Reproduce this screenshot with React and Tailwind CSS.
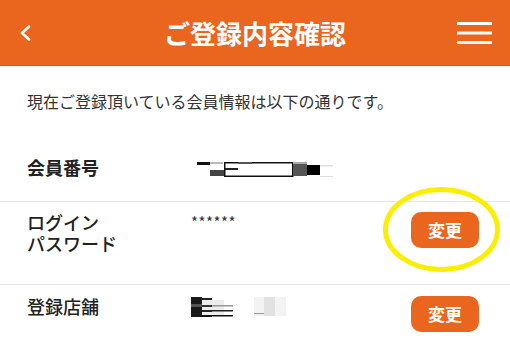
export default function App() {
  return (
    <div className="w-[510px] h-[360px] overflow-hidden bg-white font-['Noto_Sans_CJK_JP','Noto_Sans',sans-serif] text-[#222]">
      <header className="flex items-center h-[66px] bg-[#ea661f] border-b border-[#d85818] px-[14px] text-white">
        <div className="w-[44px] flex items-center">
          <svg width="20" height="20" viewBox="0 0 20 20" className="ml-[3px]">
            <polyline points="12,3.5 5,10 12,16.5" fill="none" stroke="#fff" strokeWidth="2.6" strokeLinecap="round" strokeLinejoin="round" />
          </svg>
        </div>
        <h1 className="flex-1 text-center text-[26px] leading-[32px] font-bold">ご登録内容確認</h1>
        <div className="w-[44px] flex justify-end">
          <svg width="35" height="24" viewBox="0 0 35 24" className="mr-[4px]">
            <rect x="0" y="1" width="35" height="3" fill="#fff" />
            <rect x="0" y="10.5" width="35" height="3" fill="#fff" />
            <rect x="0" y="20" width="35" height="3" fill="#fff" />
          </svg>
        </div>
      </header>

      <p className="pt-[23px] px-[27px] text-[16px] leading-[24px] text-[#333]">
        現在ご登録頂いている会員情報は以下の通りです。
      </p>

      <div className="mt-[44px] pb-[24px] px-[27px] flex items-start">
        <div className="w-[164px] text-[18px] leading-[20px] font-bold">会員番号</div>
        <svg width="150" height="20" viewBox="0 0 150 20">
          <rect x="6" y="5" width="13" height="3" fill="#111" />
          <rect x="19" y="5" width="13" height="2" fill="#bbb" />
          <rect x="19" y="13" width="14" height="6" fill="#444" />
          <rect x="33" y="11" width="14" height="2" fill="#222" />
          <rect x="33.75" y="5.75" width="68" height="13.5" fill="none" stroke="#111" strokeWidth="1.5" />
          <rect x="47" y="5" width="14" height="2" fill="#555" />
          <rect x="102" y="5" width="14" height="14" fill="#555" />
          <rect x="102" y="5" width="14" height="2" fill="#aaa" />
          <rect x="116" y="8" width="13" height="10" fill="#000" />
          <rect x="129" y="8" width="13" height="1.5" fill="#ddd" />
          <rect x="129" y="19" width="13" height="1.5" fill="#ddd" />
        </svg>
      </div>

      <div className="border-t border-[#e6e6e6] h-[83px] pt-[10px] pl-[27px] pr-[31px] flex items-start">
        <div className="w-[164px] text-[18px] leading-[21px] font-medium">
          <div>ログイン</div>
          <div>パスワード</div>
        </div>
        <div className="text-[15px] leading-[20px] text-[#333] tracking-[0.5px]">******</div>
        <div className="relative ml-auto">
          <svg width="117" height="85" viewBox="0 0 117 85" className="absolute left-[-28px] top-[-25px]">
            <ellipse cx="58.5" cy="42.5" rx="56" ry="40" fill="none" stroke="#fcee00" strokeWidth="5" />
          </svg>
          <button className="relative w-[68px] h-[36px] rounded-[10px] bg-[#ea661f] text-white text-[17px] font-bold">変更</button>
        </div>
      </div>

      <div className="border-t border-[#e6e6e6] pt-[11px] pl-[27px] pr-[31px] flex items-start">
        <div className="w-[164px] text-[18px] leading-[20px] font-medium">登録店舗</div>
        <svg width="110" height="22" viewBox="0 0 110 22">
          <rect x="11" y="4" width="22" height="16" fill="#ececec" />
          <rect x="0" y="1" width="11" height="20" fill="#1a1a1a" />
          <rect x="0" y="8" width="11" height="3" fill="#555" />
          <rect x="11" y="2" width="10" height="2" fill="#222" />
          <rect x="11" y="9" width="10" height="2" fill="#333" />
          <rect x="11" y="14" width="10" height="2" fill="#222" />
          <rect x="11" y="19" width="10" height="2" fill="#111" />
          <rect x="21" y="9" width="21" height="1.5" fill="#999" />
          <rect x="21" y="14" width="21" height="1.5" fill="#222" />
          <rect x="21" y="19" width="21" height="1.5" fill="#111" />
          <rect x="63" y="1" width="32" height="19" fill="#f3f3f3" />
          <rect x="73" y="1" width="11" height="19" fill="#e2e2e2" />
          <rect x="63" y="17" width="10" height="1" fill="#999" />
        </svg>
        <button className="ml-auto w-[68px] h-[36px] rounded-[10px] bg-[#ea661f] text-white text-[17px] font-bold">変更</button>
      </div>
    </div>
  );
}
